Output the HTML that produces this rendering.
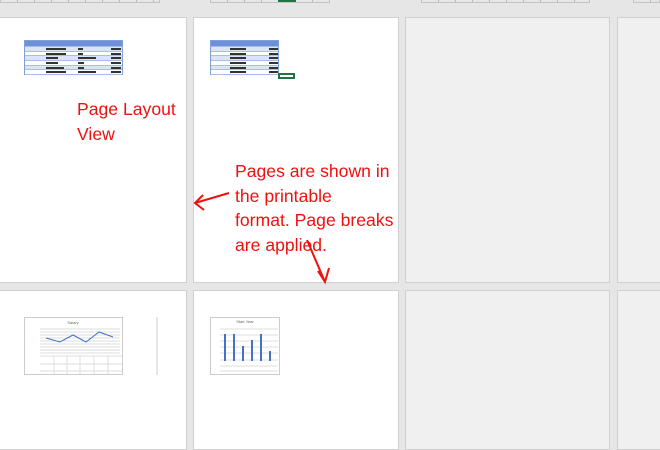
<!DOCTYPE html>
<html><head><style>
body{margin:0;width:660px;height:439px;background:#e6e6e6;position:relative;overflow:hidden;font-family:"Liberation Sans",sans-serif}
.p{position:absolute;background:#fff;border:1px solid #d0d0d0;box-sizing:border-box}
.g{background:#f0f0f0}
.t{position:absolute;color:#f01010;font-size:17.6px;line-height:24.5px;white-space:nowrap}
.tb{position:absolute;border:1px solid #7f9fd8;box-sizing:border-box;background:#fff}
.tb div{height:4.7px;border-bottom:1px solid #a8bde8;box-sizing:border-box;position:relative}
.tb div:nth-child(even){background:#dbe4f6}
.tb .h{background:#6f8fd6!important;height:6px}
.tb div i{position:absolute;top:1px;height:2px;background:#333}
.r{position:absolute;top:0;height:3px;border:1px solid #c4c4c4;border-top:0;box-sizing:border-box;background:repeating-linear-gradient(90deg,#e6e6e6 0 16px,#bbb 16px 17px)}
</style></head><body>
<div class="r" style="left:0;width:160px"></div>
<div class="r" style="left:210px;width:120px"></div>
<div style="position:absolute;left:278px;top:0;width:18px;height:2px;background:#217346"></div>
<div class="r" style="left:421px;width:169px"></div>
<div class="r" style="left:633px;width:27px"></div>

<div class="p" style="left:-2px;top:17px;width:189px;height:266px"></div>
<div class="p" style="left:193px;top:17px;width:206px;height:266px"></div>
<div class="p g" style="left:405px;top:17px;width:205px;height:266px"></div>
<div class="p g" style="left:617px;top:17px;width:50px;height:266px"></div>
<div class="p" style="left:-2px;top:290px;width:189px;height:160px"></div>
<div class="p" style="left:193px;top:290px;width:206px;height:160px"></div>
<div class="p g" style="left:405px;top:290px;width:205px;height:160px"></div>
<div class="p g" style="left:617px;top:290px;width:50px;height:160px"></div>

<div class="tb" style="left:24px;top:40px;width:99px;height:35px"><div class="h"></div><div><i style="left:21px;width:20px"></i><i style="left:53px;width:5px"></i><i style="left:86px;width:10px"></i></div><div><i style="left:21px;width:20px"></i><i style="left:53px;width:5px"></i><i style="left:86px;width:10px"></i></div><div><i style="left:21px;width:12px"></i><i style="left:53px;width:18px"></i><i style="left:86px;width:10px"></i></div><div><i style="left:21px;width:12px"></i><i style="left:53px;width:6px"></i><i style="left:86px;width:10px"></i></div><div><i style="left:21px;width:18px"></i><i style="left:53px;width:6px"></i><i style="left:86px;width:10px"></i></div><div><i style="left:21px;width:20px"></i><i style="left:53px;width:18px"></i><i style="left:86px;width:10px"></i></div></div>
<div class="tb" style="left:210px;top:40px;width:69px;height:35px"><div class="h"></div><div><i style="left:19px;width:16px"></i><i style="left:58px;width:9px"></i></div><div><i style="left:19px;width:16px"></i><i style="left:58px;width:9px"></i></div><div><i style="left:19px;width:16px"></i><i style="left:58px;width:9px"></i></div><div><i style="left:19px;width:16px"></i><i style="left:58px;width:9px"></i></div><div><i style="left:19px;width:16px"></i><i style="left:58px;width:9px"></i></div><div><i style="left:19px;width:16px"></i><i style="left:58px;width:9px"></i></div></div>
<div style="position:absolute;left:278px;top:73px;width:17px;height:6px;border:2px solid #217346;box-sizing:border-box"></div>

<div class="t" style="left:77px;top:97px">Page Layout<br>View</div>
<div class="t" style="left:235px;top:159px">Pages are shown in<br>the printable<br>format. Page breaks<br>are applied.</div>

<svg style="position:absolute;left:0;top:0" width="660" height="439">
<g stroke="#f01010" stroke-width="2" fill="none">
<path d="M229 193 L195 203 M203 195 L195 203 L204 210"/>
<path d="M307 240 L325 282 M318 271 L325 282 L329 268"/>
</g>
<g stroke="#ccc" fill="#fff"><rect x="24.5" y="317.5" width="98" height="57"/><rect x="210.5" y="317.5" width="69" height="57"/></g>
<line x1="157" y1="317" x2="157" y2="375" stroke="#ccc"/>
<text x="73" y="324" font-size="4" text-anchor="middle" fill="#666">Salary</text>
<g stroke="#ddd"><path d="M40 329H120M40 332H120M40 335H120M40 338H120M40 341H120M40 344H120M40 347H120M40 350H120M40 353H120"/></g>
<path d="M46 338L60 342L73 335L86 342L99 332L113 337" stroke="#4472c4" fill="none"/>
<g stroke="#ddd"><path d="M40 356H122M40 364H122M40 371H122M54 356V374M67 356V374M80 356V374M94 356V374M108 356V374"/></g>
<text x="245" y="323" font-size="4" text-anchor="middle" fill="#666">Start Year</text>
<g stroke="#ddd"><path d="M220 329H278M220 335H278M220 341H278M220 347H278M220 353H278M220 360H278M220 366H278M220 371H278"/></g>
<g fill="#4472c4"><rect x="224" y="334" width="2" height="27"/><rect x="233" y="334" width="2" height="27"/><rect x="242" y="346" width="2" height="15"/><rect x="251" y="340" width="2" height="21"/><rect x="260" y="334" width="2" height="27"/><rect x="269" y="351" width="2" height="10"/></g>
</svg>
</body></html>
